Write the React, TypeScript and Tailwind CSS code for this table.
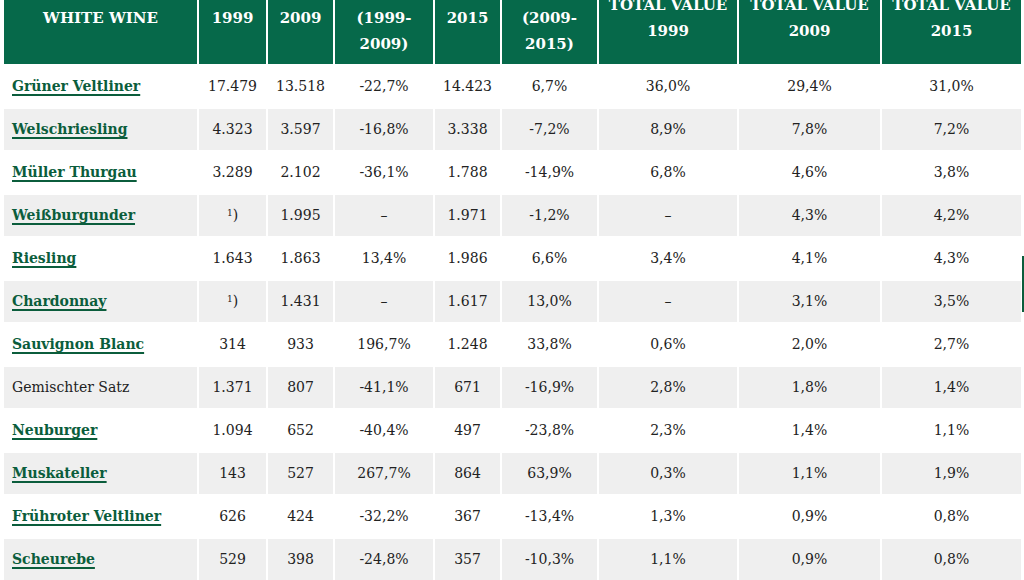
import React from 'react';

type Row = {
  name: string;
  link: boolean;
  values: React.ReactNode[];
};

const FOOT = (
  <span>
    <sup className="text-[9px]">1</sup>)
  </span>
);

const rows: Row[] = [
  { name: 'Grüner Veltliner', link: true, values: ['17.479', '13.518', '-22,7%', '14.423', '6,7%', '36,0%', '29,4%', '31,0%'] },
  { name: 'Welschriesling', link: true, values: ['4.323', '3.597', '-16,8%', '3.338', '-7,2%', '8,9%', '7,8%', '7,2%'] },
  { name: 'Müller Thurgau', link: true, values: ['3.289', '2.102', '-36,1%', '1.788', '-14,9%', '6,8%', '4,6%', '3,8%'] },
  { name: 'Weißburgunder', link: true, values: [FOOT, '1.995', '–', '1.971', '-1,2%', '–', '4,3%', '4,2%'] },
  { name: 'Riesling', link: true, values: ['1.643', '1.863', '13,4%', '1.986', '6,6%', '3,4%', '4,1%', '4,3%'] },
  { name: 'Chardonnay', link: true, values: [FOOT, '1.431', '–', '1.617', '13,0%', '–', '3,1%', '3,5%'] },
  { name: 'Sauvignon Blanc', link: true, values: ['314', '933', '196,7%', '1.248', '33,8%', '0,6%', '2,0%', '2,7%'] },
  { name: 'Gemischter Satz', link: false, values: ['1.371', '807', '-41,1%', '671', '-16,9%', '2,8%', '1,8%', '1,4%'] },
  { name: 'Neuburger', link: true, values: ['1.094', '652', '-40,4%', '497', '-23,8%', '2,3%', '1,4%', '1,1%'] },
  { name: 'Muskateller', link: true, values: ['143', '527', '267,7%', '864', '63,9%', '0,3%', '1,1%', '1,9%'] },
  { name: 'Frühroter Veltliner', link: true, values: ['626', '424', '-32,2%', '367', '-13,4%', '1,3%', '0,9%', '0,8%'] },
  { name: 'Scheurebe', link: true, values: ['529', '398', '-24,8%', '357', '-10,3%', '1,1%', '0,9%', '0,8%'] },
];

const widths = ['w-[193px]', 'w-[67px]', 'w-[65px]', 'w-[98px]', 'w-[65px]', 'w-[95px]', 'w-[138px]', 'w-[141px]', 'w-[139px]'];

export default function App() {
  return (
    <div
      className="relative w-[1024px] h-[580px] overflow-hidden bg-white text-[#222]"
      style={{ fontFamily: '"DejaVu Serif", "Liberation Serif", serif' }}
    >
      <table className="table-fixed border-separate border-spacing-[2px] mt-[-2px] ml-[2px] w-[1021px]">
        <colgroup>
          {widths.map((w, i) => (
            <col key={i} className={w} />
          ))}
        </colgroup>
        <thead>
          <tr className="text-white text-[15px] font-bold leading-[26px]">
            <th className="h-[64px] bg-[#06694a] align-top pt-[5px] text-center">WHITE WINE</th>
            <th className="bg-[#06694a] align-top pt-[5px] text-center">1999</th>
            <th className="bg-[#06694a] align-top pt-[5px] text-center">2009</th>
            <th className="bg-[#06694a] align-top pt-[5px] text-center">
              (1999-
              <br />
              2009)
            </th>
            <th className="bg-[#06694a] align-top pt-[5px] text-center">2015</th>
            <th className="bg-[#06694a] align-top pt-[5px] text-center">
              (2009-
              <br />
              2015)
            </th>
            <th className="bg-[#06694a] align-top pt-[5px] text-center">
              <div className="mt-[-13px] whitespace-nowrap">
                TOTAL VALUE
                <br />
                1999
              </div>
            </th>
            <th className="bg-[#06694a] align-top pt-[5px] text-center">
              <div className="mt-[-13px] whitespace-nowrap">
                TOTAL VALUE
                <br />
                2009
              </div>
            </th>
            <th className="bg-[#06694a] align-top pt-[5px] text-center">
              <div className="mt-[-13px] whitespace-nowrap">
                TOTAL VALUE
                <br />
                2015
              </div>
            </th>
          </tr>
        </thead>
        <tbody className="text-[14px]">
          {rows.map((row, i) => (
            <tr key={row.name} className={i % 2 === 1 ? 'bg-[#efefef]' : 'bg-white'}>
              <td className="h-[41px] px-2 align-middle whitespace-nowrap">
                {row.link ? (
                  <a href="#" className="font-bold text-[#0b5d3c] underline underline-offset-[3px] decoration-[1.5px]">
                    {row.name}
                  </a>
                ) : (
                  <span>{row.name}</span>
                )}
              </td>
              {row.values.map((v, j) => (
                <td key={j} className="text-center align-middle whitespace-nowrap">
                  {v}
                </td>
              ))}
            </tr>
          ))}
        </tbody>
      </table>
      {/* scroll indicator on the right edge */}
      <div className="absolute left-[1022px] top-[256px] w-[2px] h-[56px] bg-[#0b5d3c]" />
    </div>
  );
}
